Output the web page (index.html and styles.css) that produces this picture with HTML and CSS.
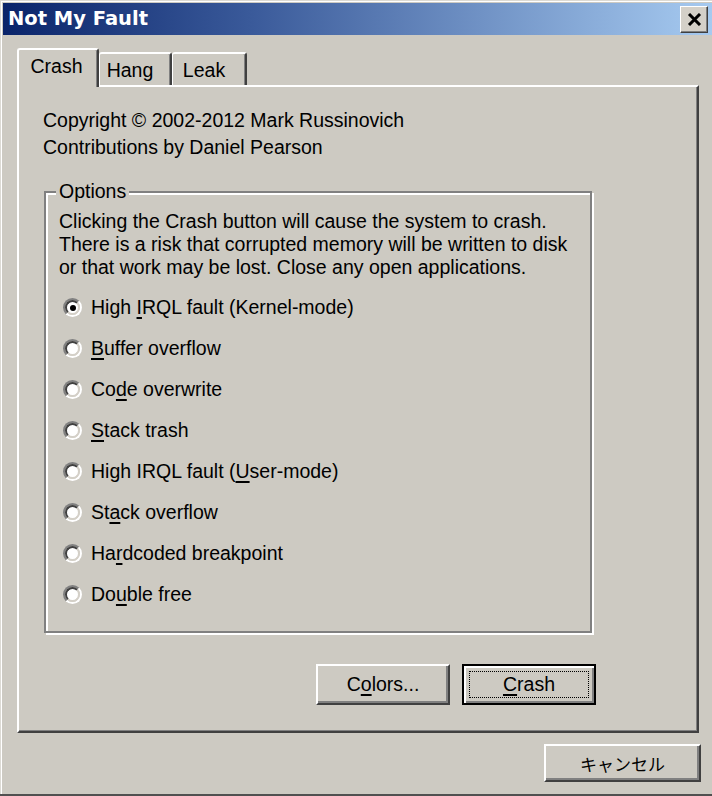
FILE: index.html
```html
<!DOCTYPE html>
<html lang="en">
<head>
<meta charset="utf-8">
<title>Not My Fault</title>
<link rel="stylesheet" href="styles.css">
</head>
<body>
<div class="window">
  <div class="titlebar">
    <span class="title">Not My Fault</span>
    <span class="close"><svg width="15" height="13" viewBox="0 0 15 13"><path d="M2 1 L13 12 M13 1 L2 12" stroke="#000" stroke-width="3" fill="none"/></svg></span>
  </div>
  <div class="client">
    <div class="tabs">
      <div class="tab sel tab-crash">Crash</div>
      <div class="tab tab-hang">Hang</div>
      <div class="tab tab-leak">Leak</div>
    </div>
    <div class="panel">
      <div class="about">Copyright © 2002-2012 Mark Russinovich<br>Contributions by Daniel Pearson</div>
      <fieldset class="group">
        <legend>Options</legend>
        <div class="desc">Clicking the Crash button will cause the system to crash.<br>There is a risk that corrupted memory will be written to disk<br>or that work may be lost. Close any open applications.</div>
        <div class="options">
          <div class="opt"><span class="radio on"></span><span class="label">High <u>I</u>RQL fault (Kernel-mode)</span></div>
          <div class="opt"><span class="radio"></span><span class="label"><u>B</u>uffer overflow</span></div>
          <div class="opt"><span class="radio"></span><span class="label">Co<u>d</u>e overwrite</span></div>
          <div class="opt"><span class="radio"></span><span class="label"><u>S</u>tack trash</span></div>
          <div class="opt"><span class="radio"></span><span class="label">High IRQL fault (<u>U</u>ser-mode)</span></div>
          <div class="opt"><span class="radio"></span><span class="label">St<u>a</u>ck overflow</span></div>
          <div class="opt"><span class="radio"></span><span class="label">Ha<u>r</u>dcoded breakpoint</span></div>
          <div class="opt"><span class="radio"></span><span class="label">Do<u>u</u>ble free</span></div>
        </div>
      </fieldset>
      <div class="actions">
        <div class="btn">C<u>o</u>lors...</div>
        <div class="btn default"><u>C</u>rash</div>
      </div>
    </div>
    <div class="footer">
      <div class="btn cancel">キャンセル</div>
    </div>
  </div>
</div>
</body>
</html>
```
FILE: styles.css
```css
html, body {
  margin: 0;
  padding: 0;
}
body {
  width: 712px;
  height: 796px;
  overflow: hidden;
  background: #cdcac2;
  font-family: "Liberation Sans", Arial, sans-serif;
  font-size: 19.5px;
  color: #000;
}
.window {
  box-sizing: border-box;
  width: 712px;
  height: 796px;
  padding: 3px 0 0 3px;
  background: #cdcac2;
  border-bottom: 2px solid #505050;
  box-shadow: inset 1px 1px 0 #dcdad4, inset 2px 2px 0 #ffffff;
}
.titlebar {
  height: 32px;
  display: flex;
  align-items: center;
  justify-content: space-between;
  padding: 0 4px 0 5px;
  background: linear-gradient(to right, #0a246a 0%, #3a5a9a 35%, #a6caf0 100%);
}
.title {
  color: #fff;
  font-family: "DejaVu Sans", sans-serif;
  font-weight: bold;
  font-size: 19.5px;
  line-height: 1;
}
.close {
  box-sizing: border-box;
  width: 28px;
  height: 27px;
  display: flex;
  align-items: center;
  justify-content: center;
  background: #d4d0c8;
  border: 1px solid;
  border-color: #ffffff #404040 #404040 #ffffff;
  box-shadow: inset -1px -1px 0 #808080;
}
.client {
  padding: 13px 0 0 14px;
}
.tabs {
  display: flex;
  align-items: flex-end;
  height: 37px;
}
.tab {
  box-sizing: border-box;
  height: 33px;
  padding: 4px 10px 0 0;
  line-height: 24px;
  text-align: center;
  background: #cdcac2;
  border-top: 2px solid #fff;
  border-left: 2px solid #fff;
  border-right: 2px solid #404040;
  border-radius: 3px 3px 0 0;
  box-shadow: inset -1px 0 0 #808080;
  font-size: 19.5px;
}
.tab.sel {
  height: 39px;
  margin-bottom: -2px;
  position: relative;
  z-index: 1;
  padding-right: 3px;
}
.tab-crash { width: 82px; }
.tab-hang { width: 73px; border-left-width: 1px; }
.tab-leak { width: 75px; border-left-width: 1px; }
.panel {
  box-sizing: border-box;
  width: 682px;
  height: 648px;
  padding: 20px 0 0 24px;
  border-top: 2px solid #fff;
  border-left: 2px solid #fff;
  border-right: 2px solid #404040;
  border-bottom: 2px solid #404040;
  box-shadow: inset -1px -1px 0 #808080;
}
.about {
  line-height: 27px;
}
.group {
  box-sizing: border-box;
  width: 548px;
  margin: 19px 0 0 1px;
  padding: 7px 0 16px 13px;
  border: 2px solid #808080;
  box-shadow: inset 2px 2px 0 #fff, 2px 2px 0 #fff;
  min-inline-size: 0;
}
.group legend {
  padding: 0 3px;
  margin-left: -3px;
  line-height: 23px;
  background: #cdcac2;
  position: relative;
}
.desc {
  line-height: 23px;
  white-space: nowrap;
}
.options {
  margin-top: 8px;
}
.opt {
  height: 41px;
  display: flex;
  align-items: center;
}
.radio {
  box-sizing: border-box;
  position: relative;
  width: 19px;
  height: 19px;
  margin-left: 4px;
  border-radius: 50%;
  border: 2px solid;
  border-color: #808080 #ffffff #ffffff #808080;
  background: #d4d0c8;
}
.radio::before {
  content: "";
  position: absolute;
  inset: 0;
  border-radius: 50%;
  box-sizing: border-box;
  border: 2px solid;
  border-color: #404040 #d4d0c8 #d4d0c8 #404040;
  background: #fff;
}
.radio.on::after {
  content: "";
  position: absolute;
  left: 4.5px;
  top: 4.5px;
  width: 6px;
  height: 6px;
  border-radius: 50%;
  background: #000;
}
.label {
  margin-left: 9px;
  white-space: nowrap;
}
u {
  text-decoration: underline;
  text-decoration-thickness: 1.5px;
  text-underline-offset: 3px;
}
.actions {
  display: flex;
  gap: 12px;
  margin: 31px 0 0 273px;
}
.btn {
  box-sizing: border-box;
  position: relative;
  width: 134px;
  height: 41px;
  display: flex;
  align-items: center;
  justify-content: center;
  background: #cdcac2;
  border: 2px solid;
  border-color: #ffffff #404040 #404040 #ffffff;
  box-shadow: inset -2px -2px 0 #808080;
}
.btn.default {
  border-color: #000;
  box-shadow: inset 2px 2px 0 #fff, inset -2px -2px 0 #808080;
}
.btn.default::after {
  content: "";
  position: absolute;
  left: 5px;
  top: 5px;
  right: 5px;
  bottom: 5px;
  border: 1px dotted #000;
}
.footer {
  width: 684px;
  display: flex;
  justify-content: flex-end;
  margin-top: 11px;
}
.btn.cancel {
  width: 157px;
  height: 38px;
  font-family: "Noto Sans CJK JP", "Liberation Sans", sans-serif;
  font-size: 17px;
}
```
